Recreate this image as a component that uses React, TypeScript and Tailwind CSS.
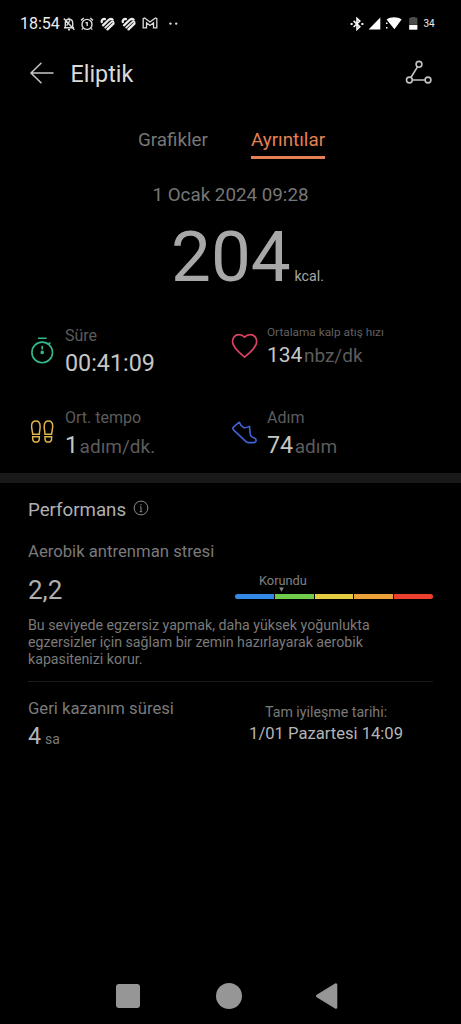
import type { ReactNode } from "react";

const HealthIcon = () => (
  <svg width="15" height="14" viewBox="0 0 15 14" fill="none" stroke="#ececec" strokeWidth="2.3" strokeLinecap="round">
    <path d="M1.7 5C1.5 3 3 1.7 5 2.1" />
    <path d="M3 8.300 8 3.500C9.500 2 11.500 1.700 12.600 2.600" />
    <path d="M5.200 10.700 10.800 5.300C12 4.200 13.300 4.200 13.600 5.200" strokeWidth="1.8" />
    <path d="M7.500 12.400 13.400 6.600" />
  </svg>
);

const StatusBar = () => (
  <div className="flex h-[46px] items-center pt-px pl-5 text-[#ececec]">
    <span className="w-[42.5px] text-base leading-5">18:54</span>
    <svg width="12" height="14" viewBox="0 0 12 14" fill="none" stroke="#dcdcdc" strokeWidth="1.4">
      <path d="M2.3 10.6V6.2C2.3 3.8 3.8 2.3 6 2.3s3.7 1.5 3.7 3.9v4.4M1 10.8h10M6 .7v1.6M5 12.8h2M.8 1.4l10.6 11.4" />
      <path d="M3.600 8.600 7 3.400" />
    </svg>
    <svg className="ml-[5px]" width="14" height="14" viewBox="0 0 14 14" fill="none" stroke="#dcdcdc" strokeWidth="1.4">
      <circle cx="7" cy="7.4" r="5" />
      <path d="M1 3.400 3.800 1M13 3.400 10.200 1M5.400 5.600l1.800.1v3.400M2.800 11.400l-1 1.200M11.200 11.400l1 1.200" />
    </svg>
    <div className="ml-[6px] flex gap-[6px]">
      <HealthIcon />
      <HealthIcon />
    </div>
    <svg className="mb-px ml-[6px]" width="16" height="12" viewBox="0 0 16 12" fill="none" stroke="#dcdcdc" strokeWidth="1.3">
      <path d="M1.200 1.600 2.600.9 8 5 13.400.9l1.400.7v9.300h-3.300V5.700L8 8.400 4.500 5.700v5.200H1.200z" />
    </svg>
    <svg className="ml-[10px]" width="12" height="4" viewBox="0 0 12 4" fill="#dcdcdc">
      <circle cx="2.400" cy="1.600" r="1.200" />
      <circle cx="8.200" cy="1.600" r="1.200" />
    </svg>
    <svg className="ml-[170px]" width="14" height="14" viewBox="0 0 14 14" fill="none" stroke="#f5f5f5" strokeWidth="1.6">
      <path d="M3.600 3.900 9.800 9.800 7 12.400V1.400l2.800 2.700L3.600 10" />
      <path d="M.6 7h2M11.400 7h2" strokeWidth="2" />
    </svg>
    <svg className="ml-[4px]" width="13" height="13" viewBox="0 0 13 13" fill="#fff">
      <path d="M.6 12.400 12.300.4v12z" />
    </svg>
    <svg className="ml-[5px]" width="16" height="13" viewBox="0 0 16 13" fill="#fff">
      <path d="M.6 2.600C4.600-.5 11.600-.5 15.600 2.600L8.400 12.200z" />
      <path d="M0 5.400h1.500V7H0zM0 10h1.500v1.600H0z" />
    </svg>
    <svg className="ml-[7px]" width="9" height="13" viewBox="0 0 9 13">
      <path d="M.2.8h2V0h4.200v.8h2v7H.2z" fill="#4c4c4c" />
      <path d="M.2 8h8.200v4.700H.2z" fill="#fff" />
    </svg>
    <span className="ml-[6px] text-[10px] leading-4">34</span>
  </div>
);

const Header = () => (
  <header className="flex h-[57px] items-center pl-[29px]">
    <svg className="mb-[3px]" width="26" height="24" viewBox="0 0 26 24" fill="none" stroke="#c8c8c8" strokeWidth="1.5" strokeLinecap="round">
      <path d="M24 12H2M12 2.300 2 12l10 9.700" />
    </svg>
    <h1 className="mb-px ml-[15.5px] text-[23.3px] leading-7 text-[#dadada]">Eliptik</h1>
    <svg className="mr-[27px] mb-[5px] ml-auto" width="30" height="26" viewBox="0 0 30 26" fill="none" stroke="#c4c4c4" strokeWidth="1.6">
      <circle cx="15" cy="5.300" r="2.900" />
      <circle cx="5.400" cy="21" r="2.900" />
      <circle cx="24" cy="21" r="2.900" />
      <path d="M13.500 7.800 6.900 18.500M8.300 21h12.800" />
    </svg>
  </header>
);

type StatProps = {
  icon: ReactNode;
  label: string;
  value: string;
  unit?: string;
  small?: boolean;
};

const Stat = ({ icon, label, value, unit, small }: StatProps) => (
  <div className="flex">
    {icon}
    <div className="whitespace-nowrap">
      <p className={small ? "text-[11.8px] leading-5 text-[#606060]" : "text-[16px] leading-5 text-[#5c5c5c]"}>{label}</p>
      <p className={small ? "-mt-px text-[21px] leading-7 text-[#c6c6c6]" : "mt-[3px] text-[23.3px] leading-7 text-[#c6c6c6]"}>
        {value}
        {unit && <span className="ml-[1.5px] text-[19px] text-[#5c5c5c]">{unit}</span>}
      </p>
    </div>
  </div>
);

const TimerIcon = () => (
  <svg className="mt-[9px] mr-[10px]" width="26" height="30" viewBox="0 0 26 30" fill="none" stroke="#35b98b" strokeWidth="1.6">
    <circle cx="13.200" cy="17.400" r="10.300" />
    <path d="M9 3.200h8.600M19.500 8.800l2-1.200" />
    <path d="M13.200 10.800v3.600" />
    <circle cx="13.200" cy="17.400" r="1" fill="#35b98b" />
  </svg>
);

const FeetIcon = () => (
  <svg className="mt-[11px] mr-[10px]" width="26" height="26" viewBox="0 0 26 26" fill="none" stroke="#dfb44c" strokeWidth="1.5">
    <path d="M3.700 15.200h6.600c.1-2.600.9-5 .8-8C11 4 9.300 2 6.900 2 4.400 2 2.600 4 2.600 7c0 3 .9 5.300 1.100 8.200z" />
    <path d="M3.700 17.700h6.600v1.700c0 2.300-1.400 3.700-3.300 3.700s-3.300-1.400-3.300-3.700z" />
    <path d="M16 15.200h6.600c.2-2.900 1.100-5.200 1.100-8.200 0-3-1.800-5-4.300-5-2.400 0-4.100 2-4.200 5.200-.1 3 .7 5.400.8 8z" />
    <path d="M16 17.700h6.600v1.700c0 2.300-1.400 3.700-3.300 3.700S16 21.700 16 19.400z" />
  </svg>
);

const HeartIcon = () => (
  <svg className="mt-[10px] mr-[8px]" width="28" height="26" viewBox="0 0 28 26" fill="none" stroke="#d94360" strokeWidth="1.7" strokeLinejoin="round">
    <path d="M13.600 25C9 21.300 1.500 15.500 1.500 9.500c0-3.900 2.600-6.900 6.300-6.900 2.300 0 4.400 1 5.800 2.500 1.400-1.500 3.500-2.500 5.800-2.500 3.700 0 6.300 3 6.300 6.900 0 6-7.500 11.800-12.100 15.500z" />
  </svg>
);

const ShoeIcon = () => (
  <svg className="mt-[12px] mr-[8px]" width="28" height="26" viewBox="0 0 28 26" fill="none" stroke="#4263d6" strokeWidth="1.6" strokeLinejoin="round">
    <path d="M8.300 2.200 2.700 6.800c-.9.800-1 2-.2 3l12.200 11.600c.8.800 1.700 1.200 2.800 1.200h5.300c1.400 0 2.200-.8 2.300-2.100.1-1.600-.5-2.200-1.700-2.500-2.700-.6-3.900-1.900-4.200-4.100l-.7-7.500c-1.900 1-3.700 1.500-5.800 1.300C10.500 6.300 9.200 4.800 8.300 2.200z" />
  </svg>
);

const StatsSection = () => (
  <section className="mt-[30px] grid h-[151px] grid-cols-[202px_1fr] grid-rows-[86px_1fr] pl-[29px]">
    <div className="pt-1">
      <Stat icon={<TimerIcon />} label="Süre" value="00:41:09" />
    </div>
    <Stat icon={<HeartIcon />} label="Ortalama kalp atış hızı" value="134" unit="nbz/dk" small />
    <Stat icon={<FeetIcon />} label="Ort. tempo" value="1" unit="adım/dk." />
    <Stat icon={<ShoeIcon />} label="Adım" value="74" unit="adım" />
  </section>
);

const StressBar = () => (
  <div className="w-[198px]">
    <p className="ml-6 text-[12.8px] leading-4 text-[#808080]">Korundu</p>
    <svg className="-mt-[2px] ml-[44px]" width="5" height="5" viewBox="0 0 5 5" fill="#858585">
      <path d="M.2.400h4.600L2.500 4.800z" />
    </svg>
    <div className="mt-[2px] grid h-[5px] grid-cols-5 gap-px overflow-hidden rounded-full">
      <div className="bg-[#3488e6]" />
      <div className="bg-[#70cd4c]" />
      <div className="bg-[#e3cb42]" />
      <div className="bg-[#eba23b]" />
      <div className="bg-[#ee402e]" />
    </div>
  </div>
);

const Performance = () => (
  <section className="pr-7 pl-7">
    <div className="flex h-[24px] items-center pt-px">
      <h2 className="text-[18.7px] leading-6 text-[#b0b0b0]">Performans</h2>
      <svg className="mb-[3px] ml-[7px]" width="16" height="16" viewBox="0 0 16 16" fill="none" stroke="#8c8c8c">
        <circle cx="8" cy="8" r="6.900" />
        <path d="M8 6.800v5M8 4v1.300M7 6.900h1M6.800 11.700h2.400" />
      </svg>
    </div>
    <p className="mt-[21px] text-[16.7px] leading-5 text-[#7a7a7a]">Aerobik antrenman stresi</p>
    <div className="mt-[11px] flex h-[34px] justify-between">
      <p className="text-[26px] leading-[34px] text-[#b0b0b0]">2,2</p>
      <StressBar />
    </div>
    <p className="mt-[10px] text-[14.2px] leading-[17px] whitespace-nowrap text-[#7a7a7a]">
      Bu seviyede egzersiz yapmak, daha yüksek yoğunlukta
      <br />
      egzersizler için sağlam bir zemin hazırlayarak aerobik
      <br />
      kapasitenizi korur.
    </p>
    <div className="mt-[13px] h-px bg-[#1b1b1b]" />
  </section>
);

const Recovery = () => (
  <section className="flex h-[289px] justify-between pt-4 pr-[58px] pl-7">
    <div className="pt-px">
      <p className="text-[16.7px] leading-5 text-[#7a7a7a]">Geri kazanım süresi</p>
      <p className="mt-[3px] text-[23.3px] leading-7 text-[#b5b5b5]">
        4<span className="ml-1 text-[14px] text-[#7a7a7a]">sa</span>
      </p>
    </div>
    <div className="pt-1 text-center">
      <p className="text-[14.2px] leading-5 text-[#7a7a7a]">Tam iyileşme tarihi:</p>
      <p className="text-[16.6px] leading-6 text-[#b5b5b5]">1/01 Pazartesi 14:09</p>
    </div>
  </section>
);

const NavBar = () => (
  <nav className="flex h-[50px] items-center pl-[116px]">
    <div className="h-6 w-6 rounded-[3px] bg-[#969696]" />
    <div className="ml-[76px] h-[26px] w-[26px] rounded-full bg-[#969696]" />
    <svg className="ml-[73px]" width="24" height="28" viewBox="0 0 24 28" fill="#969696" stroke="#969696" strokeWidth="3" strokeLinejoin="round">
      <path d="M2.500 14 20.800 2.800v22.400z" />
    </svg>
  </nav>
);

export default function App() {
  return (
    <div className="h-[1024px] w-[461px] overflow-hidden bg-black font-[Roboto,sans-serif]">
      <StatusBar />
      <Header />
      <div className="mt-[25px] flex pl-[138px] text-[18.8px] leading-6">
        <span className="w-[113px] text-[#777777]">Grafikler</span>
        <span className="border-b-[3px] border-[#e58054] pb-1 text-[#e58054]">Ayrıntılar</span>
      </div>
      <p className="mt-6 text-center text-[18.8px] leading-6 text-[#777777]">1 Ocak 2024 09:28</p>
      <div className="mt-[14px] flex h-[71px] items-baseline pl-[171px] text-[#a8a8a8]">
        <span className="w-[121px] text-[71px] leading-[72px]">204</span>
        <span className="ml-[2.5px] text-[14.2px]">kcal.</span>
      </div>
      <StatsSection />
      <div className="mb-[14px] h-[10px] bg-[#191919]" />
      <Performance />
      <Recovery />
      <NavBar />
    </div>
  );
}
